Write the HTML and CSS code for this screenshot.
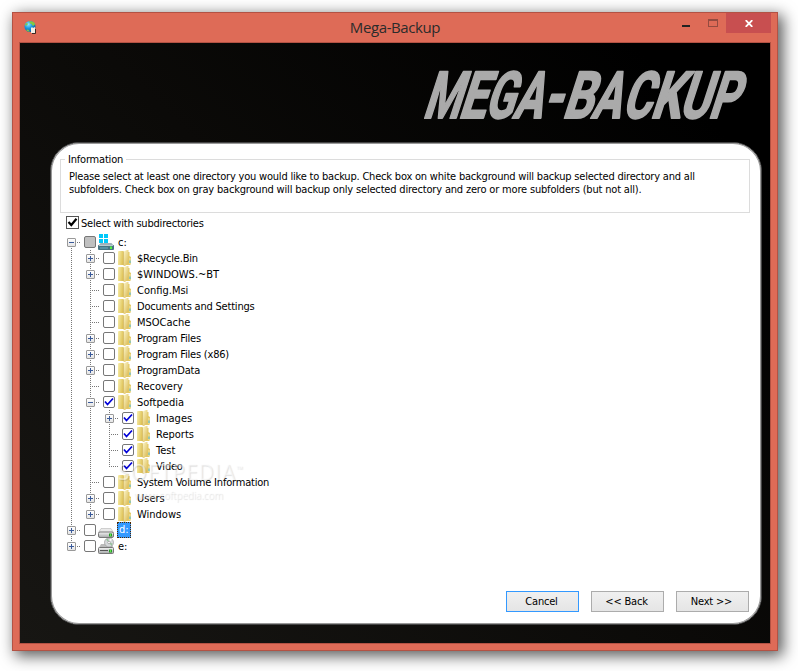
FILE: index.html
```
<!DOCTYPE html>
<html lang="en">
<head>
  <meta charset="UTF-8" />
  <title>Mega-Backup</title>
  <link rel="stylesheet" href="styles.css">
</head>
<body>
  <!-- icon sprites -->
  <svg class="sprites" width="0" height="0">
    <defs>
      <linearGradient id="gold" x1="0" x2="1" y1="0" y2="0.3">
        <stop offset="0" stop-color="#f8efad"/><stop offset="1" stop-color="#dfc358"/>
      </linearGradient>
      <linearGradient id="gold2" x1="0" x2="1" y1="0" y2="1">
        <stop offset="0" stop-color="#fdf8cc"/><stop offset="1" stop-color="#d9b74e"/>
      </linearGradient>
      <linearGradient id="steel" x1="0" x2="0" y1="0" y2="1">
        <stop offset="0" stop-color="#f4f4f4"/><stop offset="1" stop-color="#a5a8a9"/>
      </linearGradient>
      <radialGradient id="sea" cx="0.35" cy="0.3" r="0.8">
        <stop offset="0" stop-color="#8eeaff"/><stop offset="0.45" stop-color="#1c9ae0"/><stop offset="1" stop-color="#064e91"/>
      </radialGradient>
    </defs>
    <symbol id="folder" viewBox="0 0 16 16">
      <path d="M1 1.500l1-.5h4.500v14H1z" fill="url(#gold)"/>
      <path d="M10 2h2.500v4l1.500 1v7l-1 1H9z" fill="#e3c964"/>
      <path d="M6.500 1.500L10 0h1.500v13L8 16H6.500z" fill="url(#gold2)"/>
      <path d="M6.500 1.500v13.500" stroke="#c9a744" stroke-width="0.600"/>
      <path d="M12.500 8h1v6h-1z" fill="#f1e6ad"/>
      <path d="M12.500 10.500h1v2.500h-1z" fill="#41b4d5"/>
    </symbol>
    <symbol id="windrive" viewBox="0 0 16 16">
      <path d="M2.500 9h11L16 12H0z" fill="#9fb1ba"/>
      <path d="M1 0h4v4H1zM6 0h4v4H6zM1 5h4v4H1zM6 5h4v4H6z" fill="#00c8fa"/>
      <rect x="0" y="11" width="16" height="5" rx="1" fill="#477382"/>
      <path d="M1 11.500h14" stroke="#b9cbd2"/>
      <rect x="2" y="13" width="8" height="2" fill="#5c91a4"/>
      <rect x="12" y="12.500" width="2" height="2.500" fill="#55f445"/>
    </symbol>
    <symbol id="drive" viewBox="0 0 16 16">
      <path d="M3 6.500h10l2.500 4H.5z" fill="#e9e9e9" stroke="#aaa" stroke-width="0.500"/>
      <rect x="0.500" y="10" width="15" height="5.500" rx="1.500" fill="url(#steel)" stroke="#777"/>
      <rect x="11" y="11.500" width="3" height="3" fill="#249d24"/>
      <rect x="12" y="12" width="1" height="2" fill="#62e84d"/>
    </symbol>
    <symbol id="cddrive" viewBox="0 0 16 16">
      <path d="M3 6h11l1.500 4.500H.5z" fill="#bbb"/>
      <circle cx="11" cy="4.500" r="4.500" fill="#d5d8da" stroke="#999" stroke-width="0.700"/>
      <path d="M11 4.500L8 1.500l2-1zM11 4.500l3.500 1-1 2.500z" fill="#95c39b"/>
      <path d="M11 4.500l1-4 2 1z" fill="#fafafa"/>
      <circle cx="11" cy="4.500" r="1.300" fill="#fff" stroke="#888" stroke-width="0.600"/>
      <rect x="0.500" y="9.500" width="15" height="6" rx="1" fill="url(#steel)" stroke="#777"/>
      <path d="M2 12.500h8" stroke="#555"/>
      <rect x="11" y="11.500" width="3" height="3" fill="#249d24"/>
      <rect x="12" y="12" width="1" height="2" fill="#62e84d"/>
    </symbol>
  </svg>

  <div class="window">
    <header class="titlebar">
      <svg class="app-icon" width="14" height="14" viewBox="0 0 14 14">
        <circle cx="6" cy="5.500" r="5.500" fill="url(#sea)"/>
        <path d="M5 .3c3-.6 5.500.7 6.300 3L9 5 7.500 3 6 2.500zM1 3l2-1 1 1-2 2zM2 9l2-.5 2 2H4z" fill="#84c944"/>
        <path d="M7 7l1-1 1 1 2-1v2h1v4H7z" fill="#f2eee6"/>
        <path d="M11.500 8v4.500H8" stroke="#392923" fill="none"/>
      </svg>
      <h1 class="title">Mega-Backup</h1>
      <div class="controls">
        <span class="min"></span>
        <span class="max"></span>
        <button class="close" title="Close">
          <svg width="8" height="7" viewBox="0 0 8 7"><path d="M.7.2l6.600 6.600M7.300.2L.7 6.800" stroke="#fff" stroke-width="1.900"/></svg>
        </button>
      </div>
    </header>

    <main class="client">
      <svg class="logo" width="340" height="60" viewBox="0 0 340 60">
        <g transform="translate(0 53) skewX(-18)">
          <text x="2" textLength="37" lengthAdjust="spacingAndGlyphs">M</text>
          <text x="37.500" textLength="27" lengthAdjust="spacingAndGlyphs">E</text>
          <text x="63.500" textLength="29" lengthAdjust="spacingAndGlyphs">G</text>
          <text x="92" textLength="29" lengthAdjust="spacingAndGlyphs">A</text>
          <text x="121.500" textLength="19" lengthAdjust="spacingAndGlyphs">-</text>
          <text x="141.500" textLength="30" lengthAdjust="spacingAndGlyphs">B</text>
          <text x="170.500" textLength="29" lengthAdjust="spacingAndGlyphs">A</text>
          <text x="201" textLength="29" lengthAdjust="spacingAndGlyphs">C</text>
          <text x="229.500" textLength="30" lengthAdjust="spacingAndGlyphs">K</text>
          <text x="258" textLength="30" lengthAdjust="spacingAndGlyphs">U</text>
          <text x="287.500" textLength="29" lengthAdjust="spacingAndGlyphs">P</text>
        </g>
      </svg>

      <section class="panel">
        <fieldset class="info">
          <legend>Information</legend>
          <p>Please select at least one directory you would like to backup. Check box on white background will backup selected directory and all</p>
          <p class="second">subfolders. Check box on gray background will backup only selected directory and zero or more subfolders (but not all).</p>
        </fieldset>

        <label class="with-sub">
          <span class="bigcheck"><svg width="11" height="11" viewBox="0 0 11 11"><path d="M1.500 5l2.800 3L9.500 1.800" fill="none" stroke="#000" stroke-width="2.200"/></svg></span>
          <span>Select with subdirectories</span>
        </label>

        <div class="tree" id="tree"></div>

        <div class="buttons">
          <button class="btn default">Cancel</button>
          <button class="btn">&lt;&lt; Back</button>
          <button class="btn">Next &gt;&gt;</button>
        </div>

        <div class="watermark">
          <span class="brand">SOFTPEDIA<sup>™</sup></span>
          <span class="site">www.softpedia.com</span>
        </div>
      </section>
    </main>
  </div>

  <script>
    // depth, label, expander (+, - or none), checkbox state, icon, branch shape, text fit
    const rows = [
      [0, 'c:', '-', 'gray', 'windrive', 'first', 'wide'],
      [1, '$Recycle.Bin', '+', '', 'folder', 'mid', ''],
      [1, '$WINDOWS.~BT', '+', '', 'folder', 'mid', 'wide'],
      [1, 'Config.Msi', '', '', 'folder', 'mid', 'wide'],
      [1, 'Documents and Settings', '', '', 'folder', 'mid', ''],
      [1, 'MSOCache', '', '', 'folder', 'mid', 'wide'],
      [1, 'Program Files', '+', '', 'folder', 'mid', ''],
      [1, 'Program Files (x86)', '+', '', 'folder', 'mid', ''],
      [1, 'ProgramData', '+', '', 'folder', 'mid', ''],
      [1, 'Recovery', '', '', 'folder', 'mid', 'wide'],
      [1, 'Softpedia', '-', 'checked', 'folder', 'mid', 'wide'],
      [2, 'Images', '+', 'checked', 'folder', 'mid', 'wide'],
      [2, 'Reports', '', 'checked', 'folder', 'mid', 'wide'],
      [2, 'Test', '', 'checked', 'folder', 'mid', 'wide'],
      [2, 'Video', '', 'checked', 'folder', 'last', ''],
      [1, 'System Volume Information', '', '', 'folder', 'mid', ''],
      [1, 'Users', '+', '', 'folder', 'mid', 'wide'],
      [1, 'Windows', '+', '', 'folder', 'last', 'wide'],
      [0, 'd:', '+', '', 'drive', 'mid', 'wide'],
      [0, 'e:', '+', '', 'cddrive', 'last', 'wide']
    ];
    const tick = '<svg width="10" height="10" viewBox="0 0 10 10"><path d="M1 4.500l2.500 3L9 1.500" fill="none" stroke="#0000d8" stroke-width="1.700"/></svg>';

    document.getElementById('tree').innerHTML = rows.map(([depth, name, exp, state, icon, shape, fit]) => {
      const guides = '<span class="guide"></span>'.repeat(depth);
      const box = exp ? `<span class="expander ${exp === '+' ? 'plus' : ''}"></span>` : '';
      return `<div class="row ${name === 'd:' ? 'selected' : ''}">${guides}` +
        `<span class="branch ${shape}">${box}</span>` +
        `<span class="check ${state}">${state === 'checked' ? tick : ''}</span>` +
        `<svg class="icon" width="16" height="16"><use href="#${icon}"/></svg>` +
        `<span class="name ${fit}">${name}</span></div>`;
    }).join('');
  </script>
</body>
</html>
```

FILE: styles.css
```
* { box-sizing: border-box; }
body {
  margin: 0;
  padding: 12px;
  width: 798px; height: 671px;
  background: #fff;
  color: #000;
  font-family: "DejaVu Sans Condensed", "DejaVu Sans", sans-serif;
  font-stretch: condensed;
  font-size: 11px;
  letter-spacing: -0.2px;
  overflow: hidden;
}
.sprites { position: absolute; }
svg { display: block; flex: none; }

.window {
  width: 766px; height: 639px;
  border: 1px solid #b35244;
  background: #de6b57;
  padding: 0 6px 6px;
  box-shadow: 4px 4px 14px 1px rgba(0,0,0,0.65);
}

.titlebar {
  height: 29px;
  display: flex; align-items: flex-start;
}
.app-icon { margin: 8px 0 0 5px; }
.title {
  flex: 1;
  margin: 4px 0 0 70px;
  font: 15px/20px "Open Sans", sans-serif;
  letter-spacing: -0.4px;
  text-align: center;
  color: #2b2b2b;
}
.controls { display: flex; }
.min { width: 8px; height: 2px; margin: 12px 18px 0 0; background: #222; }
.max { width: 10px; height: 8px; margin: 6px 8px 0 0; border: 1px solid #944b40; border-top-width: 2px; }
.close {
  width: 45px; height: 20px; padding: 0;
  border: none; background: #c84f50;
  display: flex; align-items: center; justify-content: center;
}

.client {
  width: 752px; height: 602px;
  border: 1px solid #b35244;
  background: linear-gradient(45deg, #171613, #0b0a08 50%, #000 90%);
  padding: 22px 8px 18px 30px;
}
.logo { margin-left: 370px; overflow: visible; }
.logo text {
  font: bold 65px "Roboto", sans-serif;
  letter-spacing: 0;
  fill: #aaa;
  stroke: #aaa; stroke-width: 2px;
  stroke-linejoin: round;
}

.panel {
  position: relative;
  height: 483px;
  margin-top: 17px;
  padding: 13px 12px 12px 9px;
  border: 1px solid #444;
  border-radius: 29px;
  box-shadow: inset 0 0 0 1px #999;
  background: #fff;
  display: flex; flex-direction: column;
}
.info {
  height: 60px; flex: none;
  margin: -3px -1px 0 0;
  padding: 4px 8px;
  border: 1px solid #dcdcdc;
}
.info legend { margin-left: -4px; padding: 0 3px; line-height: 13px; }
.info p { margin: 0; line-height: 13px; white-space: nowrap; }
.info .second { letter-spacing: -0.18px; }

.with-sub { display: flex; align-items: center; gap: 2px; margin: 3px 0 0 6px; height: 13px; }
.with-sub span + span { padding-top: 1px; }
.bigcheck { width: 13px; height: 13px; border: 1px solid #555; }

.tree { margin: 5px 0 0 2px; }
.row { display: flex; height: 16px; align-items: center; white-space: nowrap; }
.guide, .branch { width: 19px; height: 16px; flex: none; }

/* dotted connector lines */
.guide, .branch {
  background: repeating-linear-gradient(#777 0 1px, transparent 1px 2px) 9px 0 / 1px 16px no-repeat;
}
.branch {
  background:
    repeating-linear-gradient(#777 0 1px, transparent 1px 2px) 9px 0 / 1px 16px no-repeat,
    repeating-linear-gradient(90deg, #777 0 1px, transparent 1px 2px) 9px 8px / 11px 1px no-repeat;
  padding: 4px 0 0 5px;
}
.branch.last { background-size: 1px 9px, 11px 1px; }
.branch.first { background-size: 1px 8px, 11px 1px; background-position: 9px 8px, 9px 8px; }
.expander {
  display: block; width: 9px; height: 9px;
  border: 1px solid #999; border-radius: 1px;
  background:
    linear-gradient(#3a5a9a, #3a5a9a) 1px 3px / 5px 1px no-repeat,
    linear-gradient(#fff, #e4e4e4);
}
.expander.plus {
  background:
    linear-gradient(#3a5a9a, #3a5a9a) 1px 3px / 5px 1px no-repeat,
    linear-gradient(#3a5a9a, #3a5a9a) 3px 1px / 1px 5px no-repeat,
    linear-gradient(#fff, #e4e4e4);
}
.check {
  flex: none; width: 12px; height: 12px;
  margin: 0 2px 0 3px;
  border: 1px solid #777; border-radius: 2px;
  background: #fff;
}
.check.gray { background: #c0c0c0; }
.icon { margin-right: 3px; }
.name { height: 16px; padding: 1px 1px 0; line-height: 15px; }
.name.wide { letter-spacing: 0; }
.selected .name {
  width: 14px;
  padding: 0 1px; line-height: 14px;
  background: #3399ff; color: #fff;
  border: 1px dotted #502800;
}

.buttons { display: flex; justify-content: flex-end; gap: 12px; margin-top: auto; }
.btn {
  width: 73px; height: 21px; padding: 0 2px 0 0;
  border: 1px solid #acacac;
  background: linear-gradient(#f0f0f0, #e5e5e5);
  color: #000;
  font: inherit;
  letter-spacing: inherit;
}
.btn.default { border-color: #3399ff; }

.watermark {
  position: absolute; left: 67px; top: 317px;
  display: flex; flex-direction: column;
  color: rgba(255,255,255,0.5);
  text-shadow: 1px 1px 1px rgba(0,0,0,0.12);
}
.brand { font: 21px/24px "Open Sans", sans-serif; letter-spacing: 1px; white-space: nowrap; }
.brand sup { font-size: 9px; line-height: 0; }
.site { margin-left: 16px; font: 10px/22px "Open Sans", sans-serif; letter-spacing: -0.200px; }
```
